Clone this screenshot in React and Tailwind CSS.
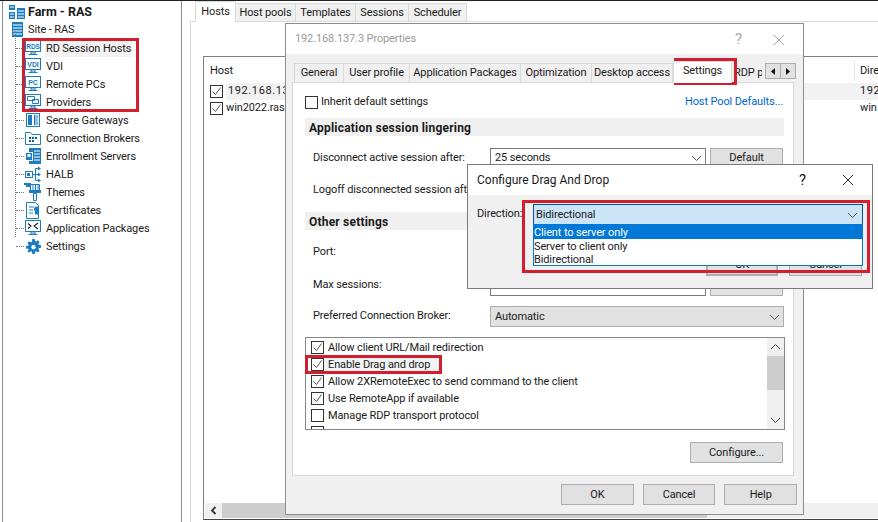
const BLUE = '#1c7cc0';

function Screen({ children }) {
  return (
    <svg width="16" height="17" viewBox="0 0 16 17" fill="none">
      <rect x="0.5" y="0.5" width="15" height="11" fill="#fff" stroke={BLUE} />
      {children}
      <path d="M6 12h4v2H6zM3.500 14.500h9" stroke={BLUE} />
    </svg>
  );
}

function ScreenText({ label, size = 7 }) {
  return (
    <Screen>
      <text x="8" y="9" textAnchor="middle" fontSize={size} fontWeight="700" fill={BLUE} fontFamily="Liberation Sans, sans-serif">
        {label}
      </text>
    </Screen>
  );
}

function Icon({ name }) {
  if (name === 'rds') return <ScreenText label="RDS" size="6.5" />;
  if (name === 'vdi') return <ScreenText label="VDI" />;
  if (name === 'pc') return <ScreenText label="PC" />;
  if (name === 'providers')
    return (
      <Screen>
        <path d="M2.500 2.500h7v4h-7zM7.500 5.500h6v4h-6z" stroke={BLUE} fill="#fff" />
      </Screen>
    );
  if (name === 'gateway')
    return (
      <svg width="14" height="14" viewBox="0 0 14 14" fill="none">
        <rect x="0.5" y="0.5" width="13" height="13" fill="#fff" stroke={BLUE} />
        <path d="M2 2h4v10H2zM8 2h1v10H8z" fill={BLUE} />
        <path d="M9 2h3v10H9z" fill="#8ebfe2" />
      </svg>
    );
  if (name === 'broker')
    return (
      <svg width="16" height="14" viewBox="0 0 16 14" fill="none">
        <path d="M0.500 13.500V1.500h5l1.500 2h8.500v10z" fill="#fff" stroke={BLUE} />
        <path d="M4 6h2v2H4zM7 6h2v2H7zM10 6h2v2h-2zM4 9h2v2H4zM7 9h2v2H7z" fill="#0f5f96" />
      </svg>
    );
  if (name === 'enroll')
    return (
      <svg width="16" height="16" viewBox="0 0 16 16" fill="none">
        <rect x="4" y="0" width="12" height="16" fill={BLUE} />
        <path d="M9 3h6M9 6h6M9 9h6M9 12h6" stroke="#fff" />
        <rect x="0.500" y="4.500" width="7" height="8" fill={BLUE} stroke="#fff" />
        <rect x="2.500" y="6" width="3" height="3" fill="#fff" />
      </svg>
    );
  if (name === 'halb')
    return (
      <svg width="16" height="16" viewBox="0 0 16 16" fill="none">
        <rect x="0.500" y="5.500" width="7" height="6" fill="#fff" stroke={BLUE} />
        <rect x="2" y="7" width="3" height="3" fill={BLUE} />
        <path d="M7.500 8.500h3M10.500 2.500v12M10.500 2.500h3M10.500 8.500h3M10.500 14.500h3" stroke={BLUE} />
        <path d="M13 0.500l3 2-3 2zM13 6.500l3 2-3 2zM13 12.500l3 2-3 2z" fill={BLUE} />
      </svg>
    );
  if (name === 'themes')
    return (
      <svg width="18" height="18" viewBox="0 0 18 18" fill="none">
        <path d="M0 0h7v2H0zM2 2h5v2H2z" fill={BLUE} />
        <path d="M6.500 1.500h9v6h-9z" fill="#fff" stroke={BLUE} />
        <path d="M9 2v5M11.500 2v5M14 2v5" stroke={BLUE} />
        <path d="M5 7h12v3H5z" fill={BLUE} />
        <path d="M9.500 10.500h3v7h-3z" fill="#fff" stroke={BLUE} />
      </svg>
    );
  if (name === 'cert')
    return (
      <svg width="14" height="17" viewBox="0 0 14 17" fill="none">
        <path d="M0.500 0.500h9l3 3v13h-12z" fill="#fff" stroke={BLUE} />
        <path d="M3 5h5M3 8h4M3 11h4" stroke={BLUE} />
        <circle cx="10.500" cy="7" r="2.500" fill={BLUE} />
        <path d="M9 9h3v4l-1.500-1L9 13z" fill={BLUE} />
      </svg>
    );
  if (name === 'apps')
    return (
      <svg width="16" height="16" viewBox="0 0 16 16" fill="none">
        <rect x="0.500" y="0.500" width="15" height="11" fill="#fff" stroke={BLUE} />
        <path d="M3 3.500l3 2.500-3 2.500M13 3l-4 3 4 3" stroke="#123" strokeWidth="1.100" />
        <path d="M6 12h4v2H6zM3.500 14.500h9" stroke={BLUE} />
      </svg>
    );
  if (name === 'settings')
    return (
      <svg width="15" height="15" viewBox="-1 -1 18 18">
        <path
          d="M6.500-1h3l.4 2.400 1.300.6 2-1.400 2.100 2.100-1.400 2 .6 1.300 2.500.4v3l-2.500.4-.6 1.300 1.400 2-2.100 2.100-2-1.400-1.300.6-.4 2.500h-3l-.4-2.500-1.300-.6-2 1.400L.7 14.100l1.400-2-.6-1.300L-1 10.400v-3l2.500-.4.6-1.300-1.400-2 2.100-2.100 2 1.400 1.300-.6z"
          fill={BLUE}
        />
        <circle cx="8" cy="8.900" r="2.600" fill="#fff" />
      </svg>
    );
  return null;
}

const TREE = [
  ['rds', 'RD Session Hosts'],
  ['vdi', 'VDI'],
  ['pc', 'Remote PCs'],
  ['providers', 'Providers'],
  ['gateway', 'Secure Gateways'],
  ['broker', 'Connection Brokers'],
  ['enroll', 'Enrollment Servers'],
  ['halb', 'HALB'],
  ['themes', 'Themes'],
  ['cert', 'Certificates'],
  ['apps', 'Application Packages'],
  ['settings', 'Settings'],
];

function Tree() {
  return (
    <div className="relative w-[180px] shrink-0 border-x border-[#8c8c8c] ml-[2px] pt-[2px] pl-[5px] bg-white">
      <div className="flex items-center h-[18px] gap-[2px] font-bold text-[12.5px] tracking-normal">
        <svg width="18" height="18" viewBox="0 0 18 18" fill="none">
          <path d="M1 2h6v5H1zM1 9h6v7H1zM9 5h8v11H9z" fill={BLUE} />
          <path d="M10 8h6M10 11h6M10 14h6M2 4h4M2 11h4M2 14h4" stroke="#fff" />
        </svg>
        <span>Farm - RAS</span>
      </div>
      <div className="flex items-center h-[18px] gap-[2px]">
        <svg width="18" height="18" viewBox="0 0 18 18" fill="none">
          <rect x="4" y="1" width="11" height="15" fill={BLUE} />
          <path d="M5 4h9M5 7h9M5 10h9M5 13h9" stroke="#fff" />
        </svg>
        <span>Site - RAS</span>
      </div>
      <div className="relative">
        <div className="absolute left-[7px] top-[-8px] h-[206px] border-l border-dotted border-[#777]" />
        {TREE.map(([icon, label], i) => (
          <div key={icon} className="flex items-center h-[18px]">
            <span className="ml-[8px] w-[8px] border-t border-dotted border-[#777]" />
            <span className="w-[18px] flex justify-center"><Icon name={icon} /></span>
            <span className={`ml-[3px] px-[1px] leading-[17px] ${i === 0 ? 'bg-[#f2f2f2]' : ''}`}>{label}</span>
          </div>
        ))}
      </div>
    </div>
  );
}

function Check({ on }) {
  return (
    <span className="w-[13px] h-[13px] shrink-0 border border-[#333] bg-white flex items-center justify-center">
      {on && (
        <svg width="11" height="11" viewBox="0 0 11 11" fill="none">
          <path d="M1.500 5.500l3 3 5-7" stroke="#555" strokeWidth="1" />
        </svg>
      )}
    </span>
  );
}

function Chevron({ color = '#555' }) {
  return (
    <svg width="11" height="7" viewBox="0 0 11 7" fill="none">
      <path d="M1 1l4.500 4.500L10 1" stroke={color} />
    </svg>
  );
}

function Button({ children, className = '' }) {
  return (
    <div className={`flex items-center justify-center pt-[1px] bg-[#e1e1e1] border border-[#adadad] ${className}`}>{children}</div>
  );
}

function Select({ value, disabled, className = '' }) {
  return (
    <div className={`flex items-center justify-between pl-[4px] pr-[3px] border ${disabled ? 'pt-[1px] bg-[#e1e1e1] border-[#adadad]' : 'bg-white border-[#7a7a7a]'} ${className}`}>
      <span>{value}</span>
      <Chevron />
    </div>
  );
}

function SettingRow({ label, value, height = 'h-[32px]' }) {
  return (
    <div className={`flex items-center shrink-0 ${height}`}>
      <span className="w-[185px] pl-[8px] whitespace-nowrap overflow-hidden">{label}</span>
      <Select value={value} className="w-[216px] h-[21px]" />
      <Button className="w-[73px] h-[21px] ml-[4px]">Default</Button>
    </div>
  );
}

function SectionBar({ children }) {
  return (
    <div className="h-[18px] shrink-0 bg-[#f0f0f0] font-bold text-[12px] tracking-[0.2px] pl-[4px] pt-[1px] flex items-center">{children}</div>
  );
}

const OPTIONS = [
  ['Allow client URL/Mail redirection', true],
  ['Enable Drag and drop', true],
  ['Allow 2XRemoteExec to send command to the client', true],
  ['Use RemoteApp if available', true],
  ['Manage RDP transport protocol', false],
  ['', false],
];

function DialogTabs() {
  const tabs = [
    ['General', 'w-[50px]'],
    ['User profile', 'w-[67px]'],
    ['Application Packages', 'w-[112px]'],
    ['Optimization', 'w-[72px]'],
    ['Desktop access', 'w-[82px]'],
  ];
  return (
    <div className="relative flex h-[19px] items-end ml-[2px]">
      {tabs.map(([t, w]) => (
        <div key={t} className={`${w} h-[19px] flex items-center justify-center pt-[1px] bg-[#f0f0f0] border border-b-0 border-[#d9d9d9] -mr-px whitespace-nowrap overflow-hidden`}>
          {t}
        </div>
      ))}
      <div className="w-[59px] h-[22px] -mb-px ml-[1px] bg-white border border-b-0 border-[#d9d9d9] flex items-center justify-center pb-[2px] z-10">Settings</div>
      <div className="w-[30px] h-[19px] pl-[2px] bg-[#f0f0f0] whitespace-nowrap overflow-hidden leading-[20px]">RDP p</div>
      <div className="absolute left-[471px] top-0 flex h-[16px]">
        <span className="w-[16px] bg-[#e1e1e1] border border-[#adadad] flex items-center justify-center">
          <svg width="4" height="7" viewBox="0 0 4 7"><path d="M4 0v7L0 3.500z" fill="#111" /></svg>
        </span>
        <span className="w-[16px] -ml-px bg-[#e1e1e1] border border-[#adadad] flex items-center justify-center">
          <svg width="4" height="7" viewBox="0 0 4 7"><path d="M0 0v7l4-3.500z" fill="#111" /></svg>
        </span>
      </div>
    </div>
  );
}

function PropertiesDialog() {
  return (
    <div className="absolute left-[285px] top-[23px] w-[519px] h-[492px] border border-[#8c8c8c] bg-[#f0f0f0] flex flex-col">
      <div className="h-[30px] shrink-0 bg-white flex items-center pt-[1px] px-[9px] text-[#9a9a9a]">
        <span>192.168.137.3 Properties</span>
        <span className="ml-auto mr-[31px] text-[15px] text-[#a8a8a8]">?</span>
        <svg className="mr-[9px]" width="12" height="12" viewBox="0 0 12 12" fill="none">
          <path d="M1 1l10 10M11 1L1 11" stroke="#a8a8a8" />
        </svg>
      </div>
      <div className="pt-[9px] px-[6px] flex flex-col">
        <DialogTabs />
        <div className="h-[394px] w-[502px] border border-[#d9d9d9] bg-white pl-[12px] pr-[9px] flex flex-col">
          <div className="flex items-center justify-between h-[35px] shrink-0 pt-[3px]">
            <div className="flex items-center gap-[3px]">
              <Check />
              <span>Inherit default settings</span>
            </div>
            <span className="text-[#0066cc] mr-[1px]">Host Pool Defaults...</span>
          </div>
          <SectionBar>Application session lingering</SectionBar>
          <div className="h-[6px] shrink-0" />
          <SettingRow label="Disconnect active session after:" value="25 seconds" />
          <SettingRow label="Logoff disconnected session after:" value="" />
          <div className="h-[6px] shrink-0" />
          <SectionBar>Other settings</SectionBar>
          <div className="h-[6px] shrink-0" />
          <SettingRow label="Port:" value="" height="h-[33px]" />
          <SettingRow label="Max sessions:" value="100" height="h-[33px]" />
          <div className="flex items-center h-[29px] shrink-0">
            <span className="w-[185px] pl-[8px]">Preferred Connection Broker:</span>
            <Select disabled value="Automatic" className="w-[294px] h-[21px]" />
          </div>
          <div className="mt-[6px] h-[93px] w-[480px] shrink-0 border border-[#828790] flex overflow-hidden">
            <div className="flex-1 pl-[5px] pt-[1px]">
              {OPTIONS.map(([label, on], i) => (
                <div key={i} className={`flex items-center gap-[4px] h-[17px] whitespace-nowrap ${i === 1 ? 'w-[130px] bg-[#f2f2f2]' : ''}`}>
                  <Check on={on} />
                  <span className="pt-[2px]">{label}</span>
                </div>
              ))}
            </div>
            <div className="w-[17px] bg-[#f0f0f0] flex flex-col items-center">
              <span className="h-[18px] flex items-center justify-center rotate-180"><Chevron color="#444" /></span>
              <span className="w-full h-[34px] bg-[#cdcdcd]" />
              <span className="mt-auto h-[18px] flex items-center justify-center"><Chevron color="#444" /></span>
            </div>
          </div>
          <Button className="w-[93px] h-[21px] mt-[12px] ml-[385px] shrink-0">Configure...</Button>
        </div>
        <div className="flex gap-[9px] mt-[8px] ml-[269px]">
          <Button className="w-[73px] h-[21px]">OK</Button>
          <Button className="w-[73px] h-[21px]">Cancel</Button>
          <Button className="w-[73px] h-[21px]">Help</Button>
        </div>
      </div>
    </div>
  );
}

function DragDropDialog() {
  return (
    <div className="absolute left-[467px] top-[164px] w-[406px] h-[125px] border border-[#7a7a7a] bg-[#f0f0f0] flex flex-col">
      <div className="h-[30px] shrink-0 bg-white flex items-center pl-[9px]">
        <span className="text-[12px] tracking-normal">Configure Drag And Drop</span>
        <span className="ml-auto mr-[36px] text-[15px]">?</span>
        <svg className="mr-[18px]" width="12" height="12" viewBox="0 0 12 12" fill="none">
          <path d="M1 1l10 10M11 1L1 11" stroke="#222" />
        </svg>
      </div>
      <div className="flex pl-[9px] pt-[9px] items-start">
        <span className="w-[56px] leading-[20px]">Direction:</span>
        <div className="relative w-[330px]">
          <div className="h-[21px] bg-[#cce4f7] border border-[#005499] flex items-center justify-between pt-[1px] pl-[2px] pr-[4px]">
            <span>Bidirectional</span>
            <Chevron />
          </div>
          <div className="absolute left-0 right-0 top-[20px] z-10 h-[42px] bg-white border border-[#0078d7] leading-[15px]">
            <div className="bg-[#0078d7] text-white h-[14px]">Client to server only</div>
            <div className="h-[13px]">Server to client only</div>
            <div className="h-[13px]">Bidirectional</div>
          </div>
        </div>
      </div>
      <div className="flex gap-[11px] mt-[29px] ml-[238px]">
        <Button className="w-[72px] h-[22px] border-2 border-[#0078d7]">OK</Button>
        <Button className="w-[73px] h-[22px]">Cancel</Button>
      </div>
    </div>
  );
}

function Hosts() {
  const tabs = [
    ['Host pools', 'w-[60px]'],
    ['Templates', 'w-[60px]'],
    ['Sessions', 'w-[53px]'],
    ['Scheduler', 'w-[58px]'],
  ];
  return (
    <div className="flex-1 min-w-0 flex flex-col ml-[8px]">
      <div className="flex h-[21px] items-end border-b border-[#d9d9d9] pl-[5px] shrink-0">
        <div className="w-[41px] h-[21px] -mb-px bg-white border border-b-0 border-[#d9d9d9] flex items-center justify-center z-10">Hosts</div>
        {tabs.map(([t, w]) => (
          <div key={t} className={`${w} h-[18px] pt-[2px] bg-[#f0f0f0] border border-b-0 border-l-0 border-[#d9d9d9] flex items-center justify-center`}>
            {t}
          </div>
        ))}
      </div>
      <div className="flex-1 min-h-0 flex flex-col border-l border-[#d9d9d9] pl-[12px] pt-[34px]">
        <div className="flex-1 min-h-0 mb-[2px] border-l border-t border-b border-l-[#808080] border-t-[#808080] border-b-[#444] flex flex-col">
          <div className="h-[26px] flex items-center pl-[6px] pt-[2px] shrink-0">
            <span>Host</span>
            <span className="ml-auto w-[24px] border-l border-[#e5e5e5] pl-[5px] h-[20px] leading-[20px] overflow-hidden">Dire</span>
          </div>
          <div className="h-[17px] flex items-center pl-[6px] gap-[3px] shrink-0">
            <Check on />
            <span className="flex-1 bg-[#f2f2f2] flex justify-between pl-[2px] tracking-[0.6px]">
              <span>192.168.137.3</span>
              <span className="w-[18px] overflow-hidden">192</span>
            </span>
          </div>
          <div className="h-[17px] flex items-center pl-[6px] gap-[3px] shrink-0">
            <Check on />
            <span className="flex-1 flex justify-between">
              <span>win2022.ras</span>
              <span className="w-[18px] overflow-hidden">win</span>
            </span>
          </div>
          <div className="mt-auto mb-[1px] ml-[1px] h-[15px] bg-[#f0f0f0] shrink-0 flex">
            <span className="w-[17px] flex items-center justify-center">
              <svg width="7" height="9" viewBox="0 0 7 9" fill="none">
                <path d="M5.500 1L2 4.500 5.500 8" stroke="#333" strokeWidth="1.800" />
              </svg>
            </span>
            <span className="w-[485px] bg-[#cdcdcd]" />
          </div>
        </div>
      </div>
    </div>
  );
}

export default function App() {
  return (
    <div className="relative w-[878px] h-[522px] overflow-hidden bg-white text-[#1a1a1a] text-[11px] tracking-[-0.12px] font-['Roboto',sans-serif]">
      <div className="h-[1px] bg-[#222]" />
      <div className="flex h-[521px]">
        <Tree />
        <Hosts />
      </div>

      <PropertiesDialog />
      <DragDropDialog />

      {/* red callouts drawn over the screenshot */}
      <div className="absolute left-[22px] top-[38px] w-[117px] h-[74px] border-[3px] border-[#d21f2e]" />
      <div className="absolute left-[674px] top-[58px] w-[63px] h-[27px] border-[3px] border-[#d21f2e]" />
      <div className="absolute left-[522px] top-[200px] w-[348px] h-[73px] border-[3px] border-[#d21f2e]" />
      <div className="absolute left-[305px] top-[355px] w-[137px] h-[19px] border-[3px] border-[#d21f2e]" />
    </div>
  );
}
